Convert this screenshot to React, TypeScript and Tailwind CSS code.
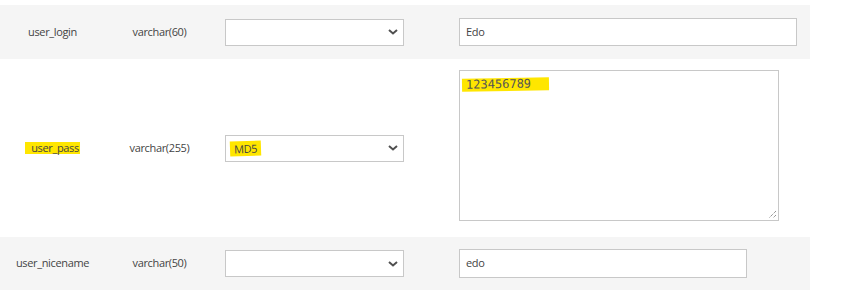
import React from "react";

function Chevron() {
  return (
    <svg width="10" height="7" viewBox="0 0 10 7" className="absolute right-[5px] top-1/2 -translate-y-1/2">
      <path d="M1 1.5 L5 5 L9 1.5" fill="none" stroke="#505050" strokeWidth="2" />
    </svg>
  );
}

function Select({ value, highlight }: { value?: string; highlight?: boolean }) {
  return (
    <div className="relative w-[179px] h-[27px] border border-[#c8c8c8] bg-white flex items-center pl-[4px]">
      {value ? (
        <span className={highlight ? "bg-[#ffe600] px-[4px] -rotate-2 leading-[15px]" : ""}>{value}</span>
      ) : null}
      <Chevron />
    </div>
  );
}

export default function App() {
  const font = { fontFamily: '"Open Sans", "Noto Sans", sans-serif' };
  return (
    <div className="bg-white w-[864px] h-[292px] pt-[5px] text-[#444] text-[11px] tracking-[-0.35px]" style={font}>
      <div className="w-[810px] h-[54px] bg-[#f5f5f5] flex items-center">
        <div className="w-[105px] text-center">user_login</div>
        <div className="w-[109px] text-center">varchar(60)</div>
        <div className="pl-[11px]">
          <Select />
        </div>
        <div className="ml-[55px] w-[338px] h-[28px] border border-[#c8c8c8] bg-white flex items-center pl-[6px]">Edo</div>
      </div>
      <div className="w-[810px] h-[178px] bg-white flex items-center">
        <div className="w-[105px] flex justify-center">
          <span className="bg-[#ffe600] pl-[6px] pr-[1px] leading-[12px]">user_pass</span>
        </div>
        <div className="w-[109px] text-center">varchar(255)</div>
        <div className="pl-[11px]">
          <Select value="MD5" highlight />
        </div>
        <div className="ml-[55px] self-start mt-[11px] relative w-[320px] h-[151px] border border-[#c8c8c8] bg-white pl-[2px] pt-[5px]">
          <span
            className="inline-block bg-[#ffe600] pl-[4px] pr-[18px] text-[12px] tracking-normal leading-[13px] -rotate-1 text-[#555]"
            style={{ fontFamily: '"DejaVu Sans Mono", "Liberation Mono", monospace' }}
          >
            123456789
          </span>
          <svg width="11" height="11" viewBox="0 0 11 11" className="absolute right-[1px] bottom-[1px]">
            <path d="M10 3 L3 10 M10 7 L7 10" stroke="#666" strokeWidth="1" strokeDasharray="1 1" />
          </svg>
        </div>
      </div>
      <div className="w-[810px] h-[53px] bg-[#f5f5f5] flex items-center">
        <div className="w-[105px] text-center">user_nicename</div>
        <div className="w-[109px] text-center">varchar(50)</div>
        <div className="pl-[11px]">
          <Select />
        </div>
        <div className="ml-[55px] w-[288px] h-[29px] border border-[#c8c8c8] bg-white flex items-center pl-[6px]">edo</div>
      </div>
    </div>
  );
}
